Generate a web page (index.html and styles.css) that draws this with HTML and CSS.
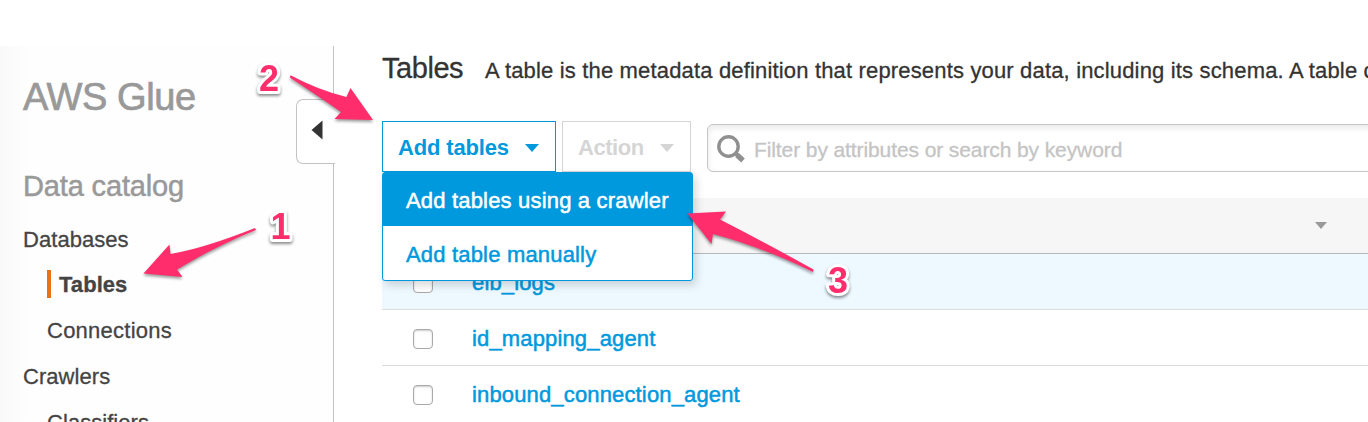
FILE: index.html
```html
<!DOCTYPE html>
<html lang="en">
<head>
<meta charset="utf-8">
<title>AWS Glue - Tables</title>
<link rel="stylesheet" href="styles.css">
</head>
<body>
<div class="app">
  <nav class="sidebar">
    <h1 class="service">AWS Glue</h1>
    <h2 class="section">Data catalog</h2>
    <ul class="nav">
      <li>Databases</li>
      <li class="sub active">Tables</li>
      <li class="sub wide">Connections</li>
      <li>Crawlers</li>
      <li class="sub">Classifiers</li>
    </ul>
    <div class="collapse">
      <svg width="12" height="20" viewBox="0 0 12 20"><path d="M11.5 0.5V19.5L0.5 10Z" fill="#333"/></svg>
    </div>
  </nav>
  <main class="main">
    <header class="heading">
      <h2 class="title">Tables</h2>
      <p class="desc">A table is the metadata definition that represents your data, including its schema. A table c</p>
    </header>
    <div class="toolbar">
      <div class="menu-wrap">
        <button class="btn primary"><span>Add tables</span><i class="caret"></i></button>
        <div class="menu">
          <div class="item selected">Add tables using a crawler</div>
          <div class="item">Add table manually</div>
        </div>
      </div>
      <button class="btn disabled"><span>Action</span><i class="caret"></i></button>
      <div class="search">
        <svg width="29" height="29" viewBox="0 0 29 29" fill="none" stroke="#909090"><circle cx="11.500" cy="11.5" r="9.7" stroke-width="3.4"/><path d="M18 18L21 20.5" stroke-width="4"/><path d="M20 20L26 25.500" stroke-width="5.4"/></svg>
        <span>Filter by attributes or search by keyword</span>
      </div>
    </div>
    <div class="table">
      <div class="thead"><i class="sort"></i></div>
      <div class="row highlighted"><i class="check"></i><a>elb_logs</a></div>
      <div class="row"><i class="check"></i><a>id_mapping_agent</a></div>
      <div class="row"><i class="check"></i><a>inbound_connection_agent</a></div>
    </div>
  </main>
  <svg class="notes" width="1368" height="422" viewBox="0 0 1368 422">
    <g class="arrows">
      <path d="M291 75.5Q318 90 346.500 97L350.500 88L373 120L334.500 119L341 112Q318 96 290.500 78Q289 76 291 75.500Z"/>
      <path d="M255 228L256 230Q214 247 177 269.500L182.500 277L143.500 273.500L169.500 244.500L170.500 254Q205 248 255 228Z"/>
      <path d="M687.500 213.500L726 211.500L720 219.500Q766 243 813.500 269.500L813 272Q762 247 713 234L711.500 244Z"/>
    </g>
    <g class="numbers">
      <text x="259" y="90.500">2</text>
      <text x="270.500" y="238.500">1</text>
      <text x="828" y="292.500">3</text>
    </g>
  </svg>
</div>
</body>
</html>
```

FILE: styles.css
```css
* { box-sizing: border-box; }
body { margin: 0; background: #fff; font: 22px/26px "Liberation Sans", Arial, sans-serif; color: #333; overflow: hidden; }
h1, h2, p, ul { margin: 0; padding: 0; font-weight: 400; }
.app { position: relative; display: flex; height: 422px; padding-top: 46px; overflow: hidden; white-space: nowrap; }

.sidebar { position: relative; flex: 0 0 334px; border-right: 1px solid #c3c3c3; background: linear-gradient(90deg, #f9f9f9, #fefefe 28px); padding: 28px 0 0 23px; color: #444; }
.service { font-size: 38px; line-height: 46px; color: #999; letter-spacing: -.4px; -webkit-text-stroke: .7px #999; }
.section { margin-top: 51px; font-size: 29px; line-height: 30px; color: #999; letter-spacing: -.15px; -webkit-text-stroke: .5px #999; }
.nav { list-style: none; margin-top: 16px; }
.nav li { display: flex; align-items: center; height: 46px; letter-spacing: .05px; -webkit-text-stroke: .3px; }
.nav .sub { padding-left: 24px; }
.nav .wide { letter-spacing: .25px; }
.nav .active { height: 28px; margin: 7px 0 10px 24px; padding: 1px 0 0 8px; border-left: 4px solid #ec7211; font-weight: 700; }
.collapse { position: absolute; left: 296px; top: 53px; width: 39px; height: 65px; border: 1px solid #c3c3c3; border-right: 0; border-radius: 7px 0 0 7px; background: #fff; padding: 20px 0 0 14px; }
.collapse svg { display: block; }

.main { flex: 0 0 1034px; padding-left: 48px; }
.heading { display: flex; align-items: baseline; height: 75px; padding-top: 5px; }
.title { width: 103px; font-size: 29px; line-height: 34px; letter-spacing: -.45px; -webkit-text-stroke: .3px; }
.desc { letter-spacing: .165px; -webkit-text-stroke: .3px; }

.toolbar { display: flex; height: 77px; }
.menu-wrap { position: relative; margin-right: 6px; }
.btn { display: flex; align-items: center; justify-content: space-between; height: 51px; padding: 2px 16px 0 15px; background: #fff; border: 1px solid; border-radius: 0; font: 700 22px/26px "Liberation Sans", Arial, sans-serif; }
.btn.primary { width: 174px; color: #0099dd; letter-spacing: -.15px; }
.btn.disabled { width: 129px; color: #d5d5d5; letter-spacing: -.45px; }
.caret { border: 7.500px solid transparent; border-top: 8px solid currentColor; border-bottom: 0; }
.menu { position: absolute; z-index: 2; left: 0; top: 51px; width: 311px; height: 109px; border: 1px solid #0099dd; border-radius: 3px; background: #fff; color: #0099dd; box-shadow: 3px 4px 10px rgba(0,0,0,.16); }
.item { height: 53px; padding: 15px 0 0 23px; letter-spacing: .18px; -webkit-text-stroke: .5px; }
.item.selected { background: #0099dd; color: #fff; }
.item:last-child { padding-top: 16px; }
.search { display: flex; align-items: center; width: 700px; height: 48px; margin: 3px 0 0 16px; padding: 3px 0 0 9px; border: 1px solid #c5c5c5; border-radius: 6px; box-shadow: inset 0 3px 6px rgba(0,0,0,.09); color: #c4c4c4; font-size: 21px; letter-spacing: -.1px; -webkit-text-stroke: .3px; }
.search span { margin-left: 8px; }

.thead { height: 56px; padding: 24px 0 0 933px; background: #f6f6f6; border-bottom: 1px solid #b8b8b8; }
.sort { display: block; width: 12px; border: 6px solid transparent; border-top: 7px solid #999; border-bottom: 0; }
.row { display: flex; align-items: center; height: 56px; padding: 3px 0 0 31px; border-bottom: 1px solid #ddd; color: #0099dd; letter-spacing: .15px; -webkit-text-stroke: .5px; }
.row:last-child { border-bottom-color: transparent; }
.row.highlighted { background: #edf8ff; }
.check { width: 20px; height: 20px; margin-right: 39px; border: 1px solid #aaa; border-radius: 4px; background: #fff; box-shadow: inset 0 1px 2px #ccc; }

.notes { position: absolute; z-index: 3; left: 0; top: 0; pointer-events: none; }
.arrows { fill: #ff2d6b; filter: drop-shadow(0 2px 1.500px rgba(0,0,0,.4)); }
.numbers { font: 700 36px "Liberation Sans", Arial, sans-serif; fill: #ff2d6b; stroke: #fff; stroke-width: 6px; stroke-linejoin: round; paint-order: stroke; filter: drop-shadow(0 2px 1.500px rgba(0,0,0,.45)); }
```
